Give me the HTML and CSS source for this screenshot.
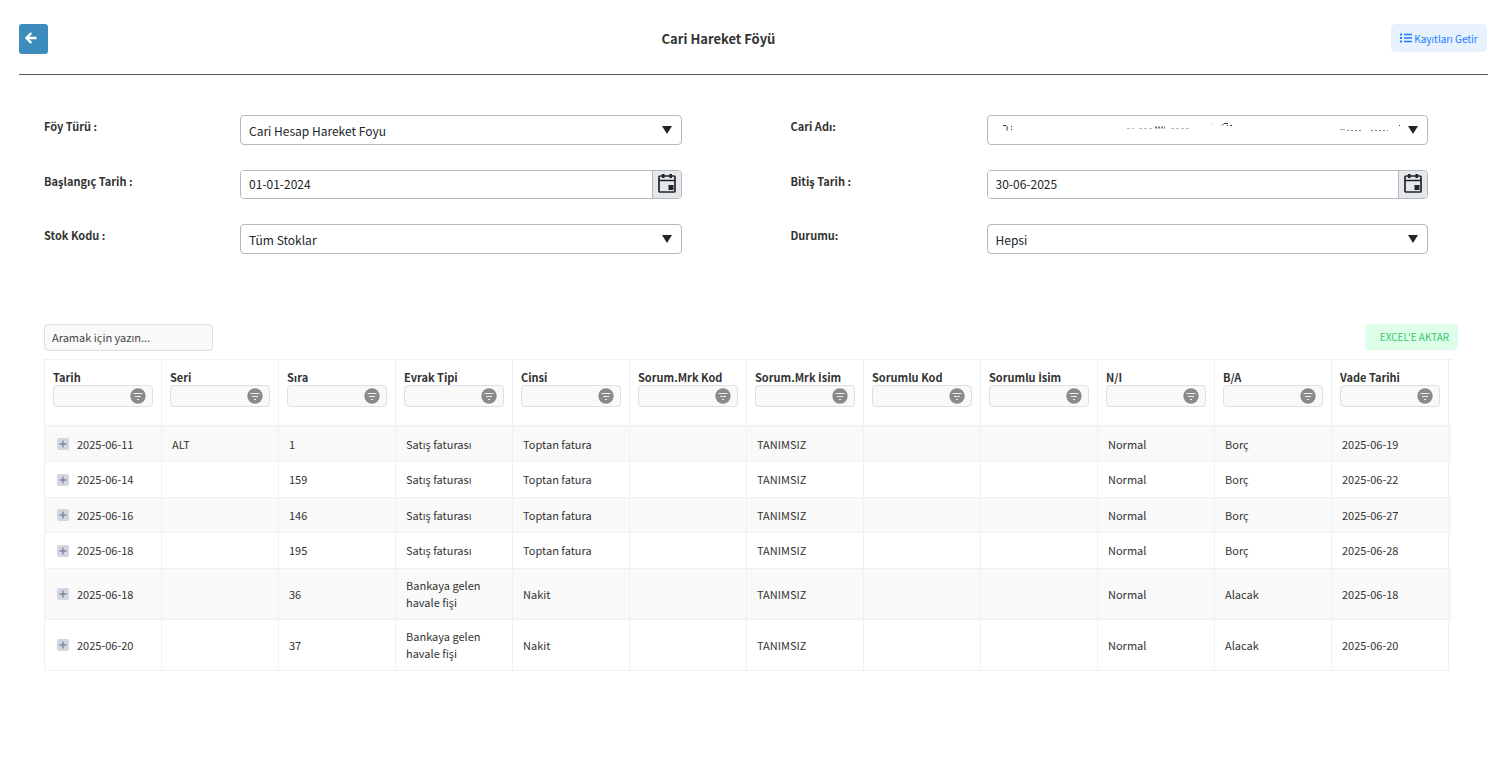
FILE: index.html
```
<!DOCTYPE html>
<html lang="tr">
<head>
    <meta charset="UTF-8">
    <meta name="viewport" content="width=device-width, initial-scale=1.0">
    <title>Cari Hareket Föyü</title>
    <link rel="stylesheet" href="styles.css">
</head>
<body>

<svg class="sprite" aria-hidden="true">
    <symbol id="icon-caret" viewBox="0 0 10 8">
        <path d="M0 0h10L5 8z" fill="#212529"/>
    </symbol>
    <symbol id="icon-calendar" viewBox="0 0 18 20">
        <rect x="1" y="3" width="16" height="16" rx="1" fill="none" stroke="#212529" stroke-width="1.700"/>
        <path d="M1 7.500h16" stroke="#212529" stroke-width="1.300"/>
        <path d="M4 1h2.500v4H4zM11.500 1H14v4h-2.500zM10.500 12h5v5h-5z" fill="#212529"/>
    </symbol>
    <symbol id="icon-filter" viewBox="0 0 16 16">
        <circle cx="8" cy="8" r="7.700" fill="#8a8a8a"/>
        <path d="M3.500 5.500h9M5 8.500h6M7 11.500h2" stroke="#eee" stroke-width="1.100"/>
    </symbol>
    <symbol id="icon-plus" viewBox="0 0 12 12">
        <rect width="12" height="12" rx="2" fill="#d3d6e0"/>
        <path d="M6 2.500v7M2.500 6h7" stroke="#7f86a3" stroke-width="1.400"/>
    </symbol>
</svg>

<header class="page-header">
    <a href="#" class="back-btn" aria-label="Geri">
        <svg width="12" height="12" viewBox="0 0 12 12"><path d="M6.300 1 1.500 6l4.800 5M2 6h9.500" fill="none" stroke="#fff" stroke-width="2.400"/></svg>
    </a>
    <h1>Cari Hareket Föyü</h1>
    <button type="button" class="fetch-btn">
        <svg width="12" height="10" viewBox="0 0 12 10"><path d="M0 1.500h2M0 5h2M0 8.500h2" stroke="#1a7cff" stroke-width="2"/><path d="M4 1.500h8M4 5h8M4 8.500h8" stroke="#1a7cff" stroke-width="1.400"/></svg>Kayıtları Getir
    </button>
</header>

<form class="filters">
    <div class="field">
        <label for="foyTuru">Föy Türü :</label>
        <div class="select-box">
            <select id="foyTuru"><option>Cari Hesap Hareket Foyu</option></select>
            <svg class="caret"><use href="#icon-caret"/></svg>
        </div>
    </div>
    <div class="field">
        <label for="cariAdi">Cari Adı:</label>
        <div class="select-box">
            <select id="cariAdi"><option></option></select>
            <!-- masked customer name -->
            <svg class="masked" aria-hidden="true" fill="none">
                <path d="M16 10.500h3l1 1v4M24 11.500h1M24 14.500h1" stroke="#333"/>
                <path d="M140 13.500h7M152 13.500h13M184 13.500h18" stroke="#bbb" stroke-dasharray="3 2"/>
                <path d="M168 12.500h10" stroke="#777" stroke-width="2" stroke-dasharray="2 1"/>
                <path d="M224 8.500h1" stroke="#bbb"/>
                <path d="M235 10.500l2-2h4M240 10.500h1M243 10.500h2" stroke="#444"/>
                <path d="M353 14.500h5" stroke="#aaa"/>
                <path d="M360 15.500h16M384 15.500h17" stroke="#888" stroke-dasharray="2 2"/>
                <path d="M412 10.500h1" stroke="#444"/>
            </svg>
            <svg class="caret"><use href="#icon-caret"/></svg>
        </div>
    </div>
    <div class="field">
        <label for="baslangic">Başlangıç Tarih :</label>
        <div class="date-box">
            <input type="text" id="baslangic" value="01-01-2024">
            <button type="button" aria-label="Tarih seç"><svg><use href="#icon-calendar"/></svg></button>
        </div>
    </div>
    <div class="field">
        <label for="bitis">Bitiş Tarih :</label>
        <div class="date-box">
            <input type="text" id="bitis" value="30-06-2025">
            <button type="button" aria-label="Tarih seç"><svg><use href="#icon-calendar"/></svg></button>
        </div>
    </div>
    <div class="field">
        <label for="stokKodu">Stok Kodu :</label>
        <div class="select-box">
            <select id="stokKodu"><option>Tüm Stoklar</option></select>
            <svg class="caret"><use href="#icon-caret"/></svg>
        </div>
    </div>
    <div class="field">
        <label for="durumu">Durumu:</label>
        <div class="select-box">
            <select id="durumu"><option>Hepsi</option></select>
            <svg class="caret"><use href="#icon-caret"/></svg>
        </div>
    </div>
</form>

<div class="toolbar">
    <input type="text" id="searchInput" class="search" placeholder="Aramak için yazın..." aria-label="Ara">
    <button type="button" class="excel-btn">EXCEL'E AKTAR</button>
</div>

<div class="table-wrap">
    <table class="ledger">
        <thead>
            <tr id="headRow"></tr>
        </thead>
        <tbody id="ledgerBody"></tbody>
    </table>
</div>

<script>
    var columns = ['Tarih', 'Seri', 'Sıra', 'Evrak Tipi', 'Cinsi', 'Sorum.Mrk Kod', 'Sorum.Mrk İsim',
        'Sorumlu Kod', 'Sorumlu İsim', 'N/I', 'B/A', 'Vade Tarihi'];

    var rows = [
        ['2025-06-11', 'ALT', '1', 'Satış faturası', 'Toptan fatura', '', 'TANIMSIZ', '', '', 'Normal', 'Borç', '2025-06-19'],
        ['2025-06-14', '', '159', 'Satış faturası', 'Toptan fatura', '', 'TANIMSIZ', '', '', 'Normal', 'Borç', '2025-06-22'],
        ['2025-06-16', '', '146', 'Satış faturası', 'Toptan fatura', '', 'TANIMSIZ', '', '', 'Normal', 'Borç', '2025-06-27'],
        ['2025-06-18', '', '195', 'Satış faturası', 'Toptan fatura', '', 'TANIMSIZ', '', '', 'Normal', 'Borç', '2025-06-28'],
        ['2025-06-18', '', '36', 'Bankaya gelen havale fişi', 'Nakit', '', 'TANIMSIZ', '', '', 'Normal', 'Alacak', '2025-06-18'],
        ['2025-06-20', '', '37', 'Bankaya gelen havale fişi', 'Nakit', '', 'TANIMSIZ', '', '', 'Normal', 'Alacak', '2025-06-20']
    ];

    document.getElementById('headRow').innerHTML = columns.map(function (name, i) {
        // the main font has no dotted capital I
        var label = name.replace('İ', '<span class="dotted-i">İ</span>');
        return '<th><label for="filter' + i + '">' + label + '</label>' +
            '<div class="filter-box"><input type="text" id="filter' + i + '">' +
            '<svg><use href="#icon-filter"/></svg></div></th>';
    }).join('') + '<th class="edge"></th>';

    document.getElementById('ledgerBody').innerHTML = rows.map(function (row) {
        return '<tr>' + row.map(function (value, i) {
            if (i === 0) {
                return '<td><div class="date-cell"><button type="button" class="expand" aria-label="Detay">' +
                    '<svg><use href="#icon-plus"/></svg></button>' + value + '</div></td>';
            }
            return '<td>' + value + '</td>';
        }).join('') + '<td class="edge"></td></tr>';
    }).join('');
</script>

</body>
</html>
```
FILE: styles.css
```
* {
    box-sizing: border-box;
}

body {
    margin: 0;
    padding: 24px 16px 24px 19px;
    background-color: #fff;
    color: #333;
    font-family: "Noto Sans CJK SC", "Open Sans", sans-serif;
    font-size: 11px;
    line-height: 17px;
}

input, select, button {
    font-family: inherit;
    font-size: inherit;
    color: inherit;
    margin: 0;
}

button {
    cursor: pointer;
}

svg {
    display: block;
}

.sprite {
    display: none;
}

/* header */
.page-header {
    display: grid;
    grid-template-columns: 1fr auto 1fr;
    align-items: start;
    height: 51px;
    border-bottom: 1px solid #55565a;
}

.back-btn {
    display: flex;
    align-items: center;
    width: 29px;
    height: 30px;
    padding: 0 0 2px 6px;
    border-radius: 3px;
    background-color: #3c8dbc;
}

h1 {
    margin: 0;
    padding-right: 70px;
    font-size: 13px;
    line-height: 30px;
}

.fetch-btn {
    display: flex;
    align-items: center;
    justify-content: center;
    justify-self: end;
    gap: 2px;
    width: 96px;
    height: 28px;
    margin-right: 1px;
    padding: 0;
    border: none;
    border-radius: 5px;
    background-color: #e8f2ff;
    color: #1a7cff;
    font-size: 10px;
    white-space: nowrap;
}

/* filter form */
.filters {
    display: grid;
    grid-template-columns: 1fr 1fr;
    gap: 25px 109px;
    padding: 40px 60px 0 25px;
}

.field {
    display: grid;
    grid-template-columns: 196px 1fr;
    align-items: start;
}

.field label {
    padding-top: 3px;
    font-weight: bold;
}

.select-box {
    position: relative;
}

.select-box select {
    display: block;
    appearance: none;
    width: 100%;
    height: 30px;
    padding: 0 8px;
    border: 1px solid #b8b8b8;
    border-radius: 4px;
    background-color: #fff;
    color: #212529;
    font-size: 12px;
}

.caret {
    position: absolute;
    top: 11px;
    right: 10px;
    width: 10px;
    height: 8px;
    pointer-events: none;
}

.masked {
    position: absolute;
    top: 0;
    left: 0;
    width: 100%;
    height: 30px;
    pointer-events: none;
}

.date-box {
    display: flex;
    height: 29px;
    border: 1px solid #b8b8b8;
    border-radius: 4px;
    overflow: hidden;
}

.date-box input {
    flex: 1;
    min-width: 0;
    padding: 0 8px 2px;
    border: none;
    color: #212529;
    font-size: 12px;
}

.date-box button {
    display: flex;
    justify-content: center;
    width: 29px;
    padding: 2px 0 0;
    border: none;
    border-left: 1px solid #b8b8b8;
    background-color: #e4e7eb;
}

.date-box svg {
    width: 18px;
    height: 20px;
}

/* table toolbar */
.toolbar {
    display: flex;
    justify-content: space-between;
    align-items: start;
    padding: 70px 30px 8px 25px;
}

.search {
    width: 169px;
    height: 27px;
    padding: 0 7px 2px;
    border: 1px solid #dcdfeb;
    border-radius: 4px;
    background-color: #f9f9f9;
}

.search::placeholder {
    color: #444;
    opacity: 1;
}

.excel-btn {
    width: 93px;
    height: 26px;
    padding: 0 0 2px 6px;
    border: none;
    border-radius: 4px;
    background-color: #dffeea;
    color: #33c76d;
    font-size: 10px;
    white-space: nowrap;
}

/* table */
.table-wrap {
    margin: 0 36px 0 25px;
}

.ledger {
    width: 100%;
    table-layout: fixed;
    border-spacing: 0;
    border-top: 1px solid #f1f1f1;
    border-left: 1px solid #f1f1f1;
}

.ledger th, .ledger td {
    border-right: 1px solid #f1f1f1;
    border-bottom: 1px solid #f1f1f1;
    text-align: left;
}

.ledger th {
    height: 67px;
    padding: 9px 8px 0;
    border-bottom-width: 2px;
    vertical-align: top;
    white-space: nowrap;
}

.ledger th label {
    display: block;
    height: 16px;
}

.dotted-i {
    font-family: "Open Sans", sans-serif;
}

.ledger td {
    height: 35px;
    padding: 8px 10px;
}

.ledger tr:nth-child(even) td {
    height: 36px;
}

.ledger tbody tr:nth-child(odd) {
    background-color: #f9f9f9;
}

.ledger .edge {
    width: 3px;
    padding: 0;
    border-right: none;
}

.filter-box {
    position: relative;
}

.filter-box input {
    display: block;
    width: 100%;
    height: 22px;
    padding: 0 24px 0 6px;
    border: 1px solid #dcdfeb;
    border-radius: 4px;
    background-color: #f9f9f9;
}

.filter-box svg {
    position: absolute;
    top: 3px;
    right: 7px;
    width: 16px;
    height: 16px;
}

.date-cell {
    display: flex;
    align-items: center;
    gap: 8px;
    margin: 0 -8px 0 2px;
}

.expand {
    padding: 0;
    border: none;
    background: none;
}

.expand svg {
    width: 12px;
    height: 12px;
}
```
